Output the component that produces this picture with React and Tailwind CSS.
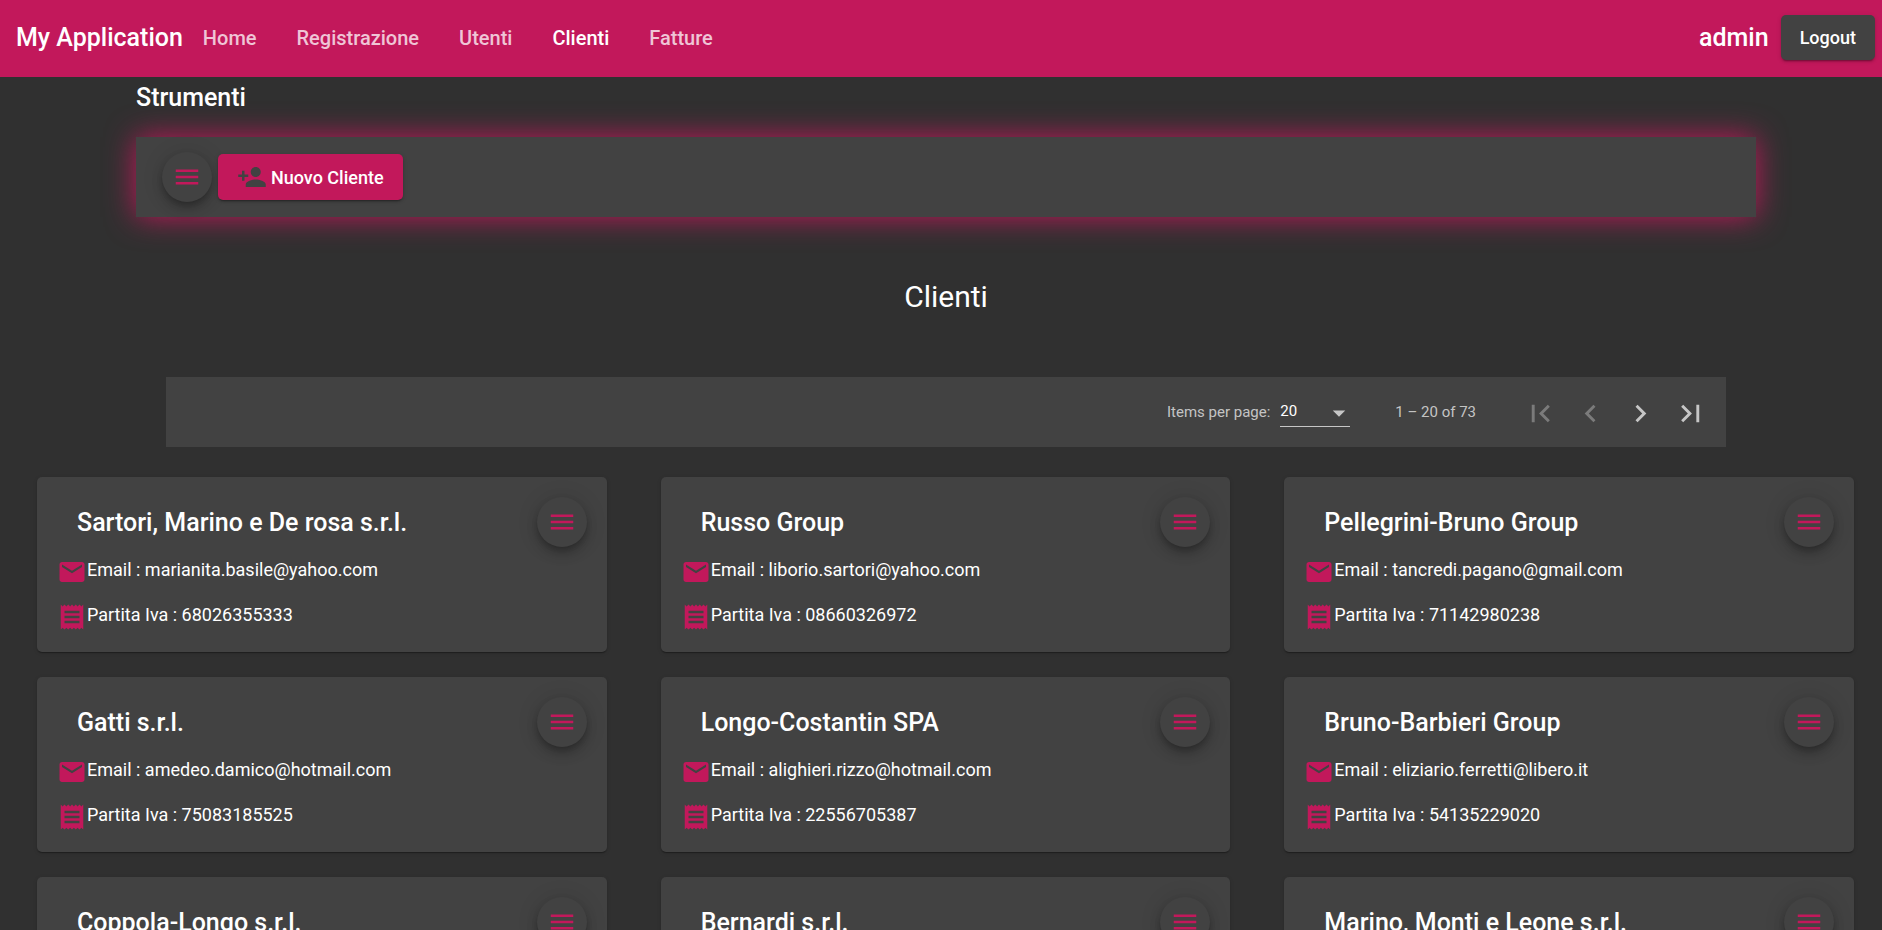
import {
  MdMenu,
  MdPersonAdd,
  MdEmail,
  MdFirstPage,
  MdChevronLeft,
  MdChevronRight,
  MdLastPage,
  MdArrowDropDown,
} from 'react-icons/md';

const links = ['Home', 'Registrazione', 'Utenti', 'Clienti', 'Fatture'];

const clients = [
  { name: 'Sartori, Marino e De rosa s.r.l.', email: 'marianita.basile@yahoo.com', vat: '68026355333' },
  { name: 'Russo Group', email: 'liborio.sartori@yahoo.com', vat: '08660326972' },
  { name: 'Pellegrini-Bruno Group', email: 'tancredi.pagano@gmail.com', vat: '71142980238' },
  { name: 'Gatti s.r.l.', email: 'amedeo.damico@hotmail.com', vat: '75083185525' },
  { name: 'Longo-Costantin SPA', email: 'alighieri.rizzo@hotmail.com', vat: '22556705387' },
  { name: 'Bruno-Barbieri Group', email: 'eliziario.ferretti@libero.it', vat: '54135229020' },
  { name: 'Coppola-Longo s.r.l.' },
  { name: 'Bernardi s.r.l.' },
  { name: 'Marino, Monti e Leone s.r.l.' },
];

function ReceiptIcon() {
  return (
    <svg viewBox="0 0 24 24" fill="currentColor" aria-hidden="true" className="size-[30px] shrink-0 text-[#c2185b]">
      <path d="M18 17H6v-2h12v2zm0-4H6v-2h12v2zm0-4H6V7h12v2zM3 22l1.5-1.5L6 22l1.5-1.5L9 22l1.5-1.5L12 22l1.5-1.5L15 22l1.5-1.5L18 22l1.5-1.5L21 22V2l-1.5 1.5L18 2l-1.5 1.5L15 2l-1.5 1.5L12 2l-1.5 1.5L9 2 7.5 3.5 6 2 4.5 3.5 3 2v20z" />
    </svg>
  );
}

function MenuButton({ label }) {
  return (
    <button
      type="button"
      aria-label={label}
      className="flex size-[50px] shrink-0 items-center justify-center rounded-full bg-[#424242] text-[#c2185b] shadow-[0_4px_6px_-1px_rgba(0,0,0,0.2),0_7px_12px_0_rgba(0,0,0,0.14),0_1px_22px_0_rgba(0,0,0,0.12)]"
    >
      <MdMenu size={30} />
    </button>
  );
}

function PageButton({ label, icon: Icon, disabled }) {
  return (
    <button
      type="button"
      aria-label={label}
      disabled={disabled}
      className="flex size-[50px] items-center justify-center pt-0.5 text-[#c6c6c6] disabled:text-[#7b7b7b]"
    >
      <Icon size={35} />
    </button>
  );
}

function ClientCard({ name, email, vat }) {
  return (
    <article className="flex min-h-[175px] flex-col rounded-[5px] bg-[#424242] p-5 shadow-[0_2px_1px_-1px_rgba(0,0,0,0.2),0_1px_1px_0_rgba(0,0,0,0.14),0_1px_4px_0_rgba(0,0,0,0.12)]">
      <div className="mb-2.5 flex items-center justify-between pl-5">
        <h2 className="pt-0.5 text-[25px] leading-[30px] font-medium">{name}</h2>
        <MenuButton label={`Menu ${name}`} />
      </div>
      <div className="flex flex-col gap-[15px] text-[18px] leading-[25px]">
        {email && (
          <p className="flex">
            <MdEmail size={30} className="shrink-0 text-[#c2185b]" />
            Email : {email}
          </p>
        )}
        {vat && (
          <p className="flex">
            <ReceiptIcon />
            Partita Iva : {vat}
          </p>
        )}
      </div>
    </article>
  );
}

export default function App() {
  return (
    <div className="h-screen overflow-y-auto bg-[#303030] font-[Roboto,sans-serif] text-white [scrollbar-width:none]">
      <header className="flex h-[77px] items-center bg-[#c2185b] pr-[7px] pb-0.5 pl-4 font-medium">
        <span className="text-[25px]">My Application</span>
        <nav className="flex grow gap-10 pl-5 text-[20px]">
          {links.map((link) => (
            <a
              key={link}
              href={`#${link.toLowerCase()}`}
              className={link === 'Clienti' ? 'text-white' : 'text-white/75'}
            >
              {link}
            </a>
          ))}
        </nav>
        <span className="text-[25px]">admin</span>
        <button
          type="button"
          className="ml-3 h-[45px] rounded-[5px] bg-[#424242] px-[19px] text-[18px] shadow-[0_3px_1px_-2px_rgba(0,0,0,0.2),0_2px_2px_0_rgba(0,0,0,0.14),0_1px_5px_0_rgba(0,0,0,0.12)]"
        >
          Logout
        </button>
      </header>

      <main className="pl-2.5">
        <section className="mx-[126px] pt-[5px]">
          <h2 className="text-[25px] leading-[32px] font-medium">Strumenti</h2>
          <div className="mt-[23px] flex items-center gap-1.5 bg-[#424242] py-[15px] pl-[26px] shadow-[0_0_30px_#c2185b]">
            <MenuButton label="Menu strumenti" />
            <button
              type="button"
              className="flex h-[46px] items-center rounded-[5px] bg-[#c2185b] px-[19px] text-[18px] font-medium shadow-[0_3px_1px_-2px_rgba(0,0,0,0.2),0_2px_2px_0_rgba(0,0,0,0.14),0_1px_5px_0_rgba(0,0,0,0.12)]"
            >
              <MdPersonAdd size={30} className="mr-1 text-[#424242]" />
              Nuovo Cliente
            </button>
          </div>
        </section>

        <h1 className="mt-[60px] text-center text-[30px] leading-[40px]">Clienti</h1>

        <div className="mx-[156px] mt-[60px] flex h-[70px] items-center justify-end bg-[#424242] pr-[11px] text-[15px] text-white/70">
          <label htmlFor="page-size">Items per page:</label>
          <div className="relative ml-2.5 w-[70px] border-b border-white/70">
            <select
              id="page-size"
              defaultValue="20"
              className="h-7 w-full appearance-none bg-transparent text-white outline-none"
            >
              <option>20</option>
            </select>
            <MdArrowDropDown size={30} className="pointer-events-none absolute top-0 -right-1" />
          </div>
          <span className="mr-[39px] ml-[45px]">1 – 20 of 73</span>
          <PageButton label="First page" icon={MdFirstPage} disabled />
          <PageButton label="Previous page" icon={MdChevronLeft} disabled />
          <PageButton label="Next page" icon={MdChevronRight} />
          <PageButton label="Last page" icon={MdLastPage} />
        </div>

        <section className="mt-[30px] grid grid-cols-3 gap-x-[54px] gap-y-[25px] pr-7 pl-[27px]">
          {clients.map((client) => (
            <ClientCard key={client.name} {...client} />
          ))}
        </section>
      </main>
    </div>
  );
}
